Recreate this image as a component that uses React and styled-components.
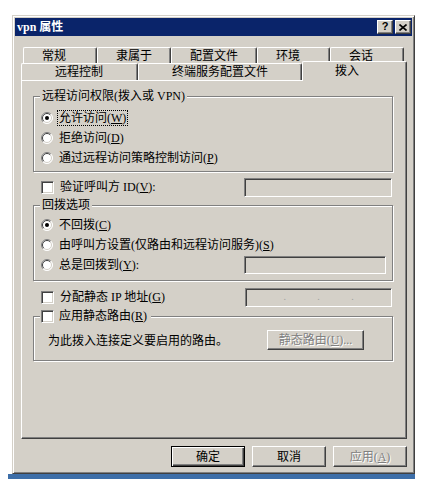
import React from "react";
import styled, { createGlobalStyle } from "styled-components";

const FACE = "#d4d0c8";
const FONT = `"Liberation Serif", "Noto Sans CJK SC", serif`;

const Global = createGlobalStyle`
  html, body { margin: 0; padding: 0; background: #fff; }
  body { font-family: ${FONT}; font-size: 12px; color: #000; }
  * { box-sizing: border-box; }
`;

const Desktop = styled.div`
  width: 407px;
  margin-left: 8px;
  padding-top: 15px;
  display: flex;
  flex-direction: column;
`;

const DesktopStrip = styled.div`
  height: 5px;
  background: #3d6ea8;
`;

const Dialog = styled.div`
  margin-left: 4px;
  width: 403px;
  height: 459px;
  background: ${FACE};
  border: 1px solid;
  border-color: ${FACE} #404040 #404040 ${FACE};
  box-shadow: inset 1px 1px #fff, inset -1px -1px #808080;
  padding: 2px;
  display: flex;
  flex-direction: column;
`;

const TitleBar = styled.div`
  height: 18px;
  background: #0a246a;
  display: flex;
  align-items: center;
  justify-content: space-between;
  padding: 0 1px 0 2px;
`;

const TitleText = styled.span`
  color: #fff;
  font-weight: bold;
  font-size: 12px;
  line-height: 14px;
`;

const TitleButtons = styled.div`
  display: flex;
  gap: 2px;
`;

const CaptionButton = styled.div`
  width: 16px;
  height: 14px;
  background: ${FACE};
  border: 1px solid;
  border-color: #fff #404040 #404040 #fff;
  box-shadow: inset -1px -1px #808080;
  display: flex;
  align-items: center;
  justify-content: center;
`;

const HelpGlyph = styled.span`
  font-family: "Liberation Sans", sans-serif;
  font-weight: bold;
  font-size: 11px;
  line-height: 11px;
  margin-top: -1px;
`;

const Body = styled.div`
  flex: 1;
  display: flex;
  flex-direction: column;
  padding: 11px 5px 0 6px;
`;

const Tabs = styled.div`
  display: flex;
  flex-direction: column;
`;

const TabRow = styled.div`
  display: flex;
  height: ${(p) => p.$h}px;
  margin-left: ${(p) => p.$indent || 0}px;
`;

const Tab = styled.div`
  position: relative;
  z-index: ${(p) => (p.$selected ? 2 : 0)};
  width: ${(p) => p.$w}px;
  height: ${(p) => (p.$selected ? 20 : p.$h)}px;
  margin-top: ${(p) => (p.$selected ? -2 : 0)}px;
  padding-left: ${(p) => p.$pad}px;
  padding-bottom: ${(p) => (p.$selected ? 1 : 0)}px;
  background: ${FACE};
  border-top: 1px solid #fff;
  border-left: 1px solid #fff;
  border-right: 1px solid #404040;
  border-radius: 2px 2px 0 0;
  box-shadow: inset -1px 0 #808080;
  display: flex;
  align-items: center;
  white-space: nowrap;
  line-height: 14px;
`;

const Panel = styled.div`
  position: relative;
  z-index: 1;
  height: 359px;
  background: ${FACE};
  border: 1px solid;
  border-color: #fff #404040 #404040 #fff;
  box-shadow: inset -1px -1px #808080;
  padding: 8px 13px 0 11px;
  display: flex;
  flex-direction: column;
`;

const Group = styled.fieldset`
  margin: ${(p) => p.$mt || 0}px 0 0 0;
  padding: 0;
  border: 1px solid #808080;
  box-shadow: inset 1px 1px #fff, 1px 1px #fff;
  min-inline-size: 0;
`;

const GroupBody = styled.div`
  padding: ${(p) => p.$pad};
  display: flex;
  flex-direction: column;
`;

const Legend = styled.legend`
  margin-left: 6px;
  padding: ${(p) => (p.$check ? "0 4px 0 1px" : "0 2px")};
  height: 14px;
  line-height: 14px;
  background: ${FACE};
  display: flex;
  align-items: center;
  gap: 5px;
`;

const OptionRow = styled.div`
  height: 20px;
  display: flex;
  align-items: center;
  justify-content: space-between;
`;

const Option = styled.label`
  display: flex;
  align-items: center;
  gap: 5px;
  line-height: 14px;
  white-space: nowrap;
`;

const LooseRow = styled.div`
  height: 20px;
  margin-top: ${(p) => p.$mt}px;
  padding: 0 1px 0 8px;
  display: flex;
  align-items: center;
  justify-content: space-between;
`;

const Caption = styled.span`
  padding: 0 1px;
  line-height: 14px;
  outline: ${(p) => (p.$focus ? "1px dotted #000" : "none")};
  outline-offset: 0;
`;

const Key = styled.u`
  text-decoration: underline;
  text-underline-offset: 1px;
`;

const RadioSvg = styled.svg`
  flex-shrink: 0;
  display: block;
`;

const CheckBox = styled.span`
  flex-shrink: 0;
  width: 13px;
  height: 13px;
  background: #fff;
  border: 1px solid;
  border-color: #808080 #fff #fff #808080;
  box-shadow: inset 1px 1px #404040, inset -1px -1px ${FACE};
`;

const Edit = styled.div`
  width: ${(p) => p.$w}px;
  height: ${(p) => p.$h}px;
  background: ${FACE};
  border: 1px solid;
  border-color: #808080 #fff #fff #808080;
  box-shadow: inset 1px 1px #404040, inset -1px -1px ${FACE};
  display: flex;
  align-items: center;
  padding: 0 6px;
`;

const IpField = styled.span`
  flex: 1;
`;

const IpDot = styled.span`
  color: #a0a0a0;
  font-size: 10px;
  line-height: 10px;
`;

const RouteRow = styled.div`
  height: 20px;
  display: flex;
  align-items: center;
  justify-content: space-between;
`;

const Button = styled.div`
  width: ${(p) => p.$w}px;
  height: ${(p) => p.$h}px;
  background: ${FACE};
  border: 1px solid;
  border-color: ${(p) => (p.$default ? "#000" : "#fff #404040 #404040 #fff")};
  box-shadow: ${(p) =>
    p.$default
      ? "inset 1px 1px #fff, inset -1px -1px #404040, inset -2px -2px #808080"
      : "inset -1px -1px #808080"};
  display: flex;
  align-items: center;
  justify-content: center;
  line-height: 14px;
  white-space: nowrap;
  color: ${(p) => (p.$disabled ? "#808080" : "#000")};
  text-shadow: ${(p) => (p.$disabled ? "1px 1px #fff" : "none")};
`;

const Footer = styled.div`
  margin-top: 7px;
  display: flex;
  justify-content: flex-end;
  gap: 7px;
`;

const Radio = ({ checked }) => (
  <RadioSvg width="12" height="12" viewBox="0 0 12 12">
    <circle cx="6" cy="6" r="5.5" fill="#fff" />
    <path d="M2.1 9.9 A5.5 5.5 0 0 1 9.9 2.1" stroke="#808080" fill="none" />
    <path d="M2.8 9.2 A4.5 4.5 0 0 1 9.2 2.8" stroke="#404040" fill="none" />
    <path d="M9.9 2.1 A5.5 5.5 0 0 1 2.1 9.9" stroke="#fff" fill="none" />
    <path d="M9.2 2.8 A4.5 4.5 0 0 1 2.8 9.2" stroke={FACE} fill="none" />
    {checked && <circle cx="6" cy="6" r="2" fill="#000" />}
  </RadioSvg>
);

const CloseIcon = () => (
  <svg width="8" height="7" viewBox="0 0 8 7">
    <path d="M0.5 0.5 L7.5 6.5 M7.5 0.5 L0.5 6.5" stroke="#000" strokeWidth="1.6" />
  </svg>
);

const row1 = [
  ["常规", 74],
  ["隶属于", 74],
  ["配置文件", 86],
  ["环境", 73],
  ["会话", 74],
];

export default function App() {
  return (
    <>
      <Global />
      <Desktop>
        <Dialog>
          <TitleBar>
            <TitleText>vpn 属性</TitleText>
            <TitleButtons>
              <CaptionButton>
                <HelpGlyph>?</HelpGlyph>
              </CaptionButton>
              <CaptionButton>
                <CloseIcon />
              </CaptionButton>
            </TitleButtons>
          </TitleBar>
          <Body>
            <Tabs>
              <TabRow $h={16} $indent={2}>
                {row1.map(([t, w]) => (
                  <Tab key={t} $w={w} $h={16} $pad={18}>
                    {t}
                  </Tab>
                ))}
              </TabRow>
              <TabRow $h={17}>
                <Tab $w={117} $h={17} $pad={33}>远程控制</Tab>
                <Tab $w={164} $h={17} $pad={33}>终端服务配置文件</Tab>
                <Tab $w={105} $h={17} $pad={32} $selected>拨入</Tab>
              </TabRow>
            </Tabs>
            <Panel>
              <Group>
                <Legend>远程访问权限(拨入或 VPN)</Legend>
                <GroupBody $pad="5px 6px 3px 7px">
                  <OptionRow>
                    <Option>
                      <Radio checked />
                      <Caption $focus>
                        允许访问(<Key>W</Key>)
                      </Caption>
                    </Option>
                  </OptionRow>
                  <OptionRow>
                    <Option>
                      <Radio />
                      <Caption>
                        拒绝访问(<Key>D</Key>)
                      </Caption>
                    </Option>
                  </OptionRow>
                  <OptionRow>
                    <Option>
                      <Radio />
                      <Caption>
                        通过远程访问策略控制访问(<Key>P</Key>)
                      </Caption>
                    </Option>
                  </OptionRow>
                </GroupBody>
              </Group>

              <LooseRow $mt={5}>
                <Option>
                  <CheckBox />
                  <Caption>
                    验证呼叫方 ID(<Key>V</Key>):
                  </Caption>
                </Option>
                <Edit $w={148} $h={19} />
              </LooseRow>

              <Group $mt={1}>
                <Legend>回拨选项</Legend>
                <GroupBody $pad="3px 6px 5px 7px">
                  <OptionRow>
                    <Option>
                      <Radio checked />
                      <Caption>
                        不回拨(<Key>C</Key>)
                      </Caption>
                    </Option>
                  </OptionRow>
                  <OptionRow>
                    <Option>
                      <Radio />
                      <Caption>
                        由呼叫方设置(仅路由和远程访问服务)(<Key>S</Key>)
                      </Caption>
                    </Option>
                  </OptionRow>
                  <OptionRow>
                    <Option>
                      <Radio />
                      <Caption>
                        总是回拨到(<Key>Y</Key>):
                      </Caption>
                    </Option>
                    <Edit $w={142} $h={18} />
                  </OptionRow>
                </GroupBody>
              </Group>

              <LooseRow $mt={6}>
                <Option>
                  <CheckBox />
                  <Caption>
                    分配静态 IP 地址(<Key>G</Key>)
                  </Caption>
                </Option>
                <Edit $w={147} $h={19}>
                  <IpField />
                  <IpDot>.</IpDot>
                  <IpField />
                  <IpDot>.</IpDot>
                  <IpField />
                  <IpDot>.</IpDot>
                  <IpField />
                </Edit>
              </LooseRow>

              <Group $mt={2}>
                <Legend $check>
                  <CheckBox />
                  <span>
                    应用静态路由(<Key>R</Key>)
                  </span>
                </Legend>
                <GroupBody $pad="7px 28px 10px 14px">
                  <RouteRow>
                    <span>为此拨入连接定义要启用的路由。</span>
                    <Button $w={97} $h={20} $disabled>
                      静态路由(<Key>U</Key>)...
                    </Button>
                  </RouteRow>
                </GroupBody>
              </Group>
            </Panel>
            <Footer>
              <Button $w={74} $h={21} $default>确定</Button>
              <Button $w={74} $h={21}>取消</Button>
              <Button $w={74} $h={21} $disabled>
                应用(<Key>A</Key>)
              </Button>
            </Footer>
          </Body>
        </Dialog>
        <DesktopStrip />
      </Desktop>
    </>
  );
}
